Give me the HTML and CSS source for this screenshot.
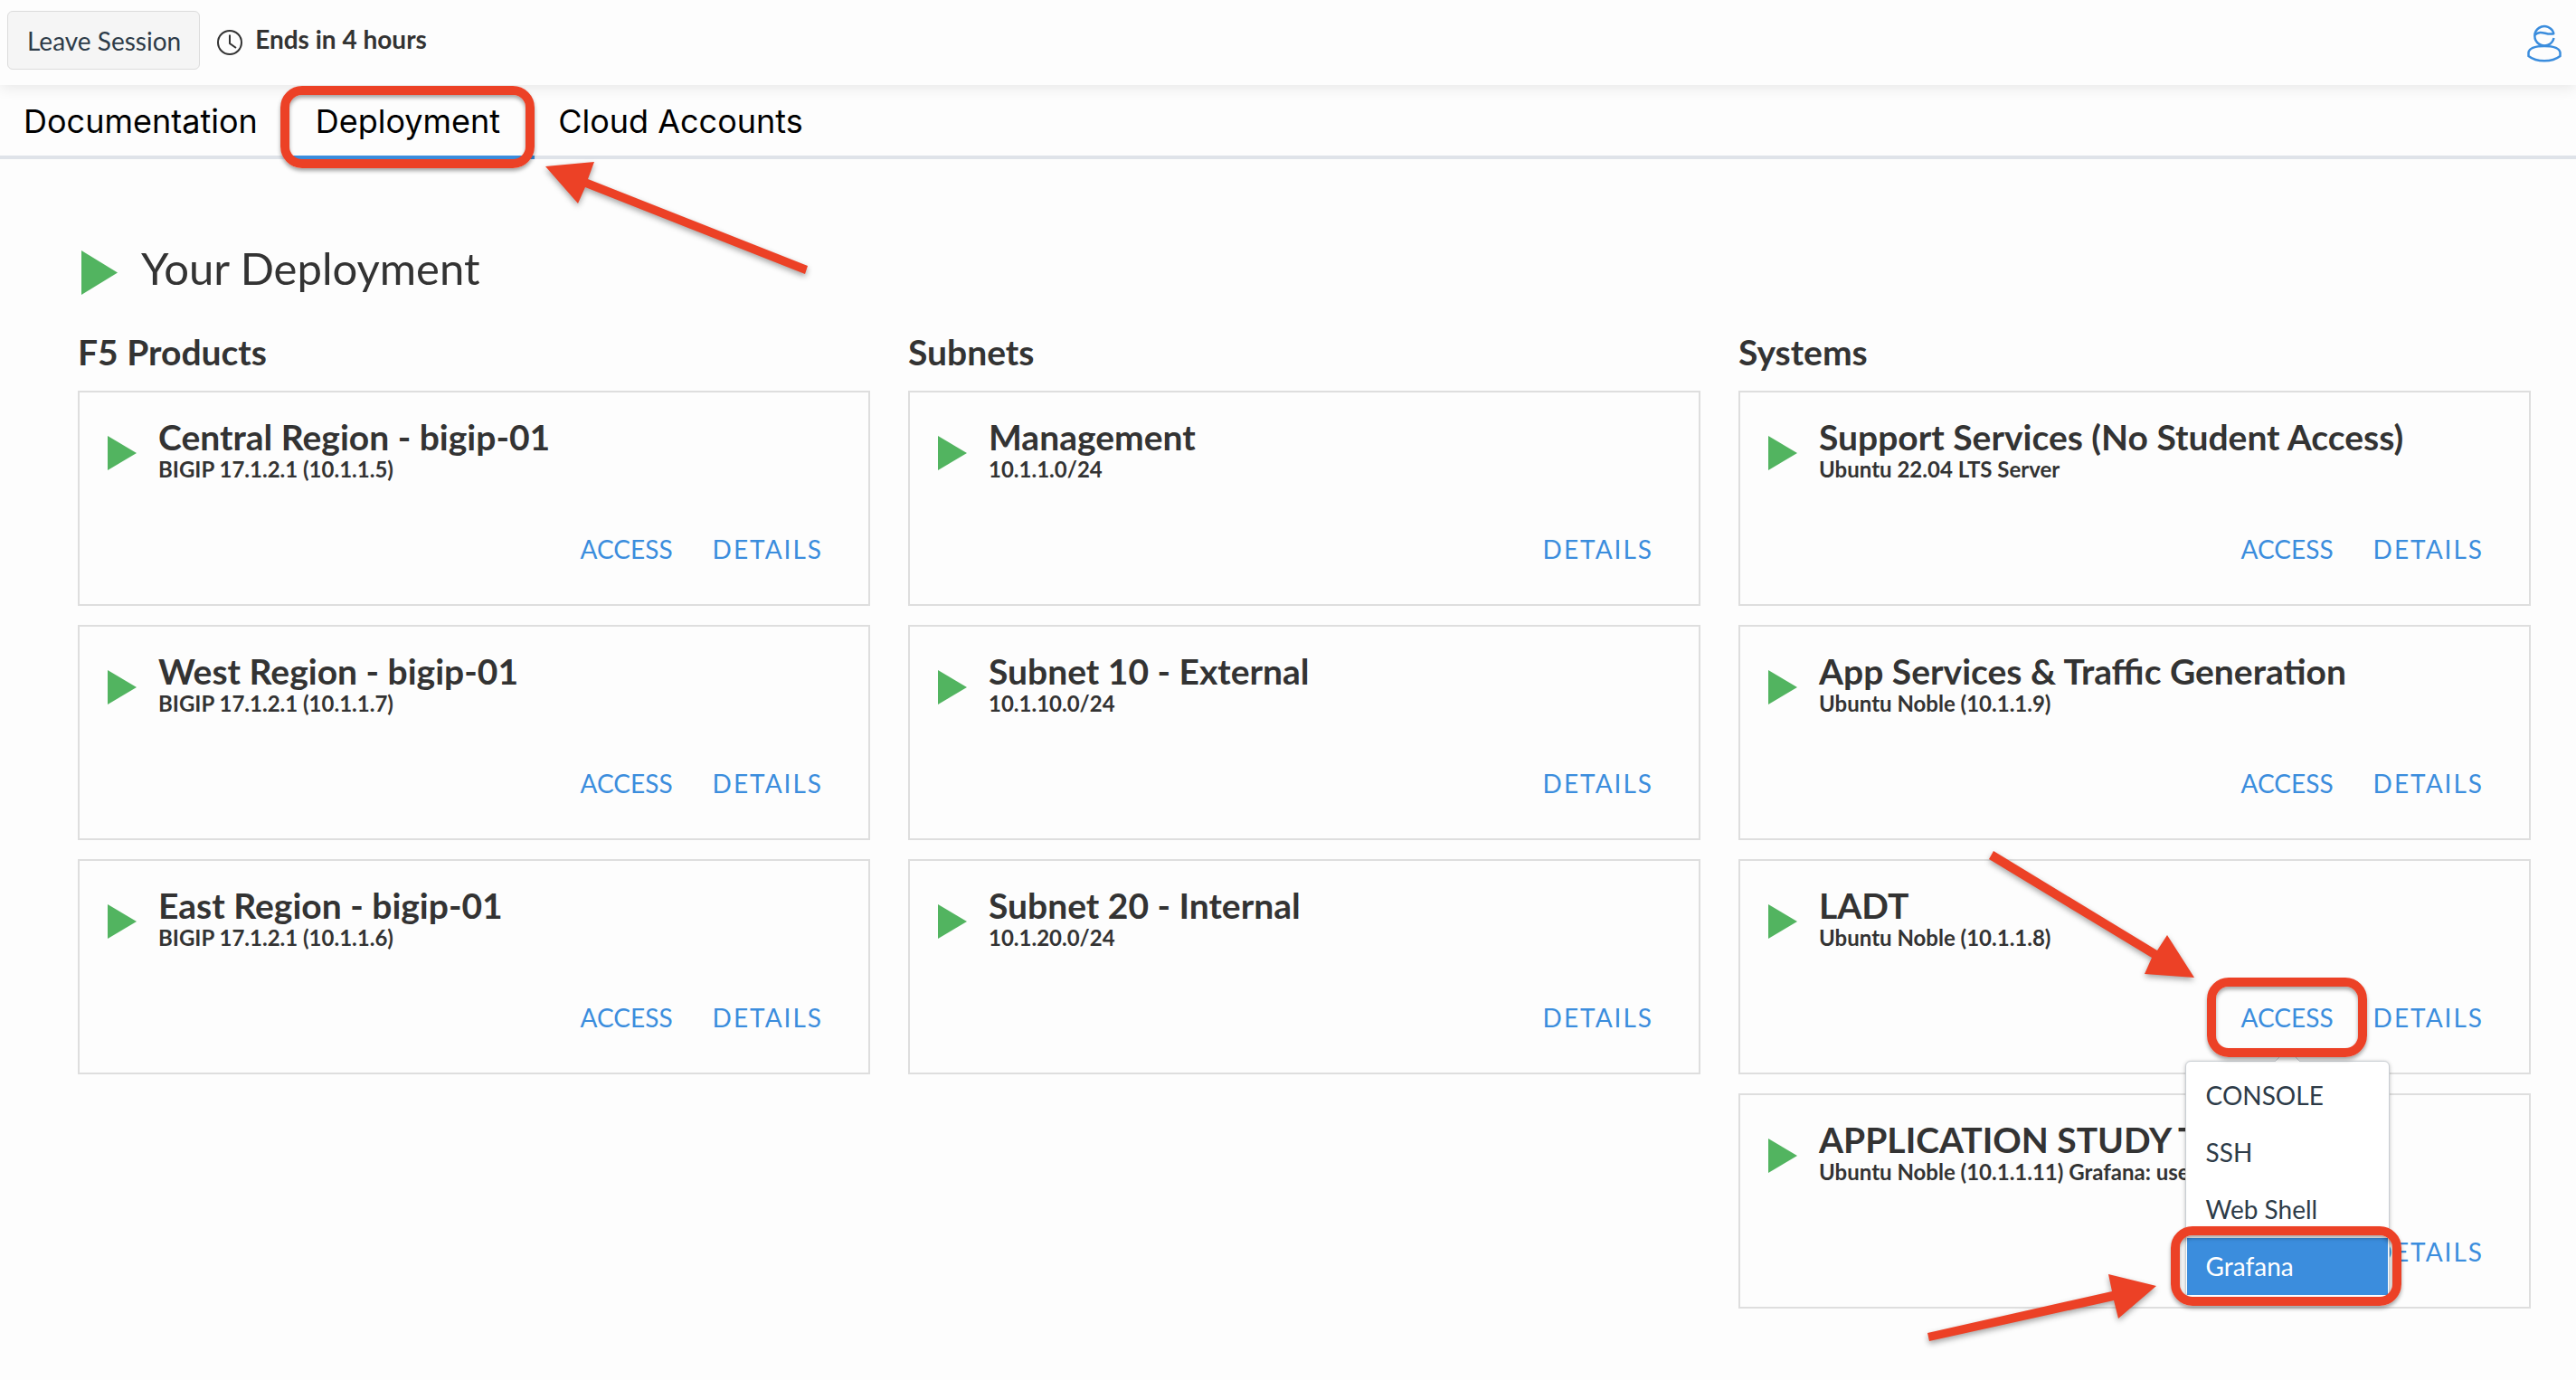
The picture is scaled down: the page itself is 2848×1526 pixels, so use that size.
FILE: index.html
```html
<!DOCTYPE html>
<html lang="en">
<head>
<meta charset="utf-8">
<title>Deployment</title>
<link rel="stylesheet" href="styles.css">
</head>
<body>
<header class="topbar">
  <button class="leave" type="button">Leave Session</button>
  <div class="timer">
    <svg class="clock" viewBox="0 0 28 28" aria-hidden="true"><circle cx="14" cy="14" r="13"/><path d="M14 5.500v9.500l7 5"/></svg>
    <span>Ends in 4 hours</span>
  </div>
  <button class="account" type="button" aria-label="Account">
    <svg viewBox="0 0 40 44" aria-hidden="true"><path d="M30.500 11.500A10.700 10.700 0 1 0 30.500 16"/><path d="M9.500 12.500C17 6 22 14 31 11"/><path d="M2.500 36v-4c1-5 8-7 17.500-7s16.500 2 17.500 7v4c-9 7-26 7-35 0z"/></svg>
  </button>
</header>

<nav class="tabs">
  <a class="tab" href="#documentation">Documentation</a>
  <a class="tab tab-active" href="#deployment" aria-current="page">Deployment
    <span class="ring ring-tab"></span>
    <svg class="arrow arrow-tab" viewBox="0 0 300 130" aria-hidden="true"><path d="M4 9L58 4L51 23L294 119L291 128L48 32L40 50z"/></svg>
  </a>
  <a class="tab" href="#cloud-accounts">Cloud Accounts</a>
</nav>

<main class="page">
  <h1 class="page-title"><svg class="play play-large" viewBox="0 0 40 49" aria-hidden="true"><path d="M0 0L40 24.500L0 49z"/></svg>Your Deployment</h1>
  <div class="columns">
    <section class="column">
      <h2>F5 Products</h2>
      <article class="card">
        <div class="card-head"><svg class="play" viewBox="0 0 32 38" aria-hidden="true"><path d="M0 0L32 19L0 38z"/></svg><div class="names"><h3>Central Region - bigip-01</h3><p>BIGIP 17.1.2.1 (10.1.1.5)</p></div></div>
        <div class="actions"><button class="action" type="button">ACCESS</button><button class="action action-wide" type="button">DETAILS</button></div>
      </article>
      <article class="card">
        <div class="card-head"><svg class="play" viewBox="0 0 32 38" aria-hidden="true"><path d="M0 0L32 19L0 38z"/></svg><div class="names"><h3>West Region - bigip-01</h3><p>BIGIP 17.1.2.1 (10.1.1.7)</p></div></div>
        <div class="actions"><button class="action" type="button">ACCESS</button><button class="action action-wide" type="button">DETAILS</button></div>
      </article>
      <article class="card">
        <div class="card-head"><svg class="play" viewBox="0 0 32 38" aria-hidden="true"><path d="M0 0L32 19L0 38z"/></svg><div class="names"><h3>East Region - bigip-01</h3><p>BIGIP 17.1.2.1 (10.1.1.6)</p></div></div>
        <div class="actions"><button class="action" type="button">ACCESS</button><button class="action action-wide" type="button">DETAILS</button></div>
      </article>
    </section>

    <section class="column">
      <h2>Subnets</h2>
      <article class="card">
        <div class="card-head"><svg class="play" viewBox="0 0 32 38" aria-hidden="true"><path d="M0 0L32 19L0 38z"/></svg><div class="names"><h3>Management</h3><p>10.1.1.0/24</p></div></div>
        <div class="actions"><button class="action action-wide" type="button">DETAILS</button></div>
      </article>
      <article class="card">
        <div class="card-head"><svg class="play" viewBox="0 0 32 38" aria-hidden="true"><path d="M0 0L32 19L0 38z"/></svg><div class="names"><h3>Subnet 10 - External</h3><p>10.1.10.0/24</p></div></div>
        <div class="actions"><button class="action action-wide" type="button">DETAILS</button></div>
      </article>
      <article class="card">
        <div class="card-head"><svg class="play" viewBox="0 0 32 38" aria-hidden="true"><path d="M0 0L32 19L0 38z"/></svg><div class="names"><h3>Subnet 20 - Internal</h3><p>10.1.20.0/24</p></div></div>
        <div class="actions"><button class="action action-wide" type="button">DETAILS</button></div>
      </article>
    </section>

    <section class="column">
      <h2>Systems</h2>
      <article class="card">
        <div class="card-head"><svg class="play" viewBox="0 0 32 38" aria-hidden="true"><path d="M0 0L32 19L0 38z"/></svg><div class="names"><h3>Support Services (No Student Access)</h3><p>Ubuntu 22.04 LTS Server</p></div></div>
        <div class="actions"><button class="action" type="button">ACCESS</button><button class="action action-wide" type="button">DETAILS</button></div>
      </article>
      <article class="card">
        <div class="card-head"><svg class="play" viewBox="0 0 32 38" aria-hidden="true"><path d="M0 0L32 19L0 38z"/></svg><div class="names"><h3>App Services &amp; Traffic Generation</h3><p>Ubuntu Noble (10.1.1.9)</p></div></div>
        <div class="actions"><button class="action" type="button">ACCESS</button><button class="action action-wide" type="button">DETAILS</button></div>
      </article>
      <article class="card">
        <div class="card-head"><svg class="play" viewBox="0 0 32 38" aria-hidden="true"><path d="M0 0L32 19L0 38z"/></svg><div class="names"><h3>LADT</h3><p>Ubuntu Noble (10.1.1.8)</p></div></div>
        <div class="actions">
          <div class="dropdown">
            <button class="action" type="button" aria-expanded="true">ACCESS</button>
            <div class="menu">
              <svg class="caret" viewBox="0 0 28 15" aria-hidden="true"><path d="M0 15L14 1L28 15"/></svg>
              <button class="item" type="button">CONSOLE</button>
              <button class="item" type="button">SSH</button>
              <button class="item" type="button">Web Shell</button>
              <button class="item item-active" type="button">Grafana</button>
              <span class="ring ring-item"></span>
              <svg class="arrow arrow-item" viewBox="0 0 260 80" aria-hidden="true"><path d="M1 67L205 21L201 2L254 15L212 51L207 31L3 76z"/></svg>
            </div>
            <span class="ring ring-access"></span>
            <svg class="arrow arrow-access" viewBox="0 0 232 146" aria-hidden="true"><path d="M1 12L6 3L187 113L198 96L228 143L173 139L181 121z"/></svg>
          </div>
          <button class="action action-wide" type="button">DETAILS</button>
        </div>
      </article>
      <article class="card">
        <div class="card-head"><svg class="play" viewBox="0 0 32 38" aria-hidden="true"><path d="M0 0L32 19L0 38z"/></svg><div class="names"><h3>APPLICATION STUDY T</h3><p>Ubuntu Noble (10.1.1.11) Grafana: use</p></div></div>
        <div class="actions"><button class="action action-wide" type="button">DETAILS</button></div>
      </article>
    </section>
  </div>
</main>
</body>
</html>
```
FILE: styles.css
```css
* { box-sizing: border-box; }
body { margin: 0; background: #fdfdfd; color: #333; font-family: Lato, "Open Sans", sans-serif; }
button { margin: 0; padding: 0; border: 0; background: none; font: inherit; color: inherit; cursor: pointer; }
h1, h2, h3, p { margin: 0; }
svg { display: block; flex: none; overflow: visible; }

.topbar { position: relative; display: flex; align-items: flex-start; height: 94px; padding: 12px 12px 0 8px; background: #fdfdfd; box-shadow: 0 2px 16px rgba(0, 0, 0, 0.1); }
.leave { height: 65px; padding: 0 20px 0 21px; border: 1px solid #dcdcdc; border-radius: 6px; background: #f5f5f5; color: #2d3b48; font-size: 28px; }
.timer { display: flex; align-items: flex-start; gap: 14px; margin-left: 19px; font-size: 28px; font-weight: 700; line-height: 62px; }
.clock { width: 28px; height: 28px; margin-top: 21px; fill: none; stroke: #333; stroke-width: 2; }
.account { margin: 14px 3px 0 auto; }
.account svg { width: 40px; height: 44px; fill: none; stroke: #3b8ddd; stroke-width: 2.5; }

.tabs { display: flex; height: 82px; border-bottom: 4px solid #dfe3e9; font-family: Inter, sans-serif; font-size: 36px; line-height: 80px; }
.tab { position: relative; height: 82px; padding: 0 38px 0 26px; color: #000; text-decoration: none; }
.tab-active { border-bottom: 4px solid #3b8ddd; }

.page { padding: 86px 50px 78px 86px; }
.page-title { display: flex; align-items: center; gap: 26px; padding-left: 4px; font-size: 49px; font-weight: 400; line-height: 68px; }
.play { width: 32px; height: 38px; margin-top: 22px; fill: #52b460; }
.play-large { width: 40px; height: 49px; margin-top: 10px; }
.columns { display: grid; grid-template-columns: repeat(3, minmax(0, 1fr)); gap: 42px; align-items: start; margin-top: 36px; }
.column { display: flex; flex-direction: column; gap: 21px; }
h2 { margin-bottom: -1px; font-size: 39px; line-height: 46px; }
.card { display: flex; flex-direction: column; justify-content: space-between; min-height: 238px; padding: 26px 50px 41px 31px; border: 2px solid #dedede; }
.card-head { display: flex; align-items: flex-start; gap: 24px; white-space: nowrap; }
h3 { font-size: 39px; line-height: 46px; }
.names p { font-size: 24px; font-weight: 700; line-height: 26px; }
.actions { display: flex; justify-content: flex-end; gap: 44px; }
.action { color: #3b8ddd; font-size: 28px; line-height: 40px; }
.action-wide { letter-spacing: 2px; }

.dropdown { position: relative; }
.menu { position: absolute; z-index: 2; top: 68px; left: 50%; width: 226px; margin-left: -113px; padding: 6px 1px 2px; border: 1px solid #c9ced3; border-radius: 6px; background: #fff; box-shadow: 0 1px 4px rgba(0, 0, 0, 0.25); }
.item { display: block; width: 100%; height: 63px; padding: 0 0 2px 21px; color: #2d3b48; font-size: 28px; text-align: left; }
.item-active { background: #3b8ddd; color: #fff; }
.caret { position: absolute; top: -15px; left: 98px; width: 28px; height: 15px; fill: #fff; stroke: #c9ced3; stroke-width: 1; }

.ring { position: absolute; z-index: 3; border: 10px solid #ec4126; border-radius: 24px; box-shadow: 0 3px 4px rgba(0, 0, 0, 0.35), inset 0 3px 4px rgba(0, 0, 0, 0.35); pointer-events: none; }
.ring-tab { top: 1px; left: -13px; right: 0; height: 91px; }
.ring-access { top: -24px; left: 50%; width: 177px; height: 88px; margin-left: -89px; }
.ring-item { bottom: -10px; left: -17px; right: -14px; height: 88px; }
.arrow { position: absolute; z-index: 4; fill: #ec4126; filter: drop-shadow(0 3px 3px rgba(0, 0, 0, 0.35)); pointer-events: none; }
.arrow-tab { top: 81px; left: calc(100% + 8px); width: 300px; height: 130px; }
.arrow-access { right: calc(100% + 48px); bottom: calc(100% + 21px); width: 232px; height: 146px; }
.arrow-item { right: calc(100% + 27px); bottom: -53px; width: 260px; height: 80px; }
```
